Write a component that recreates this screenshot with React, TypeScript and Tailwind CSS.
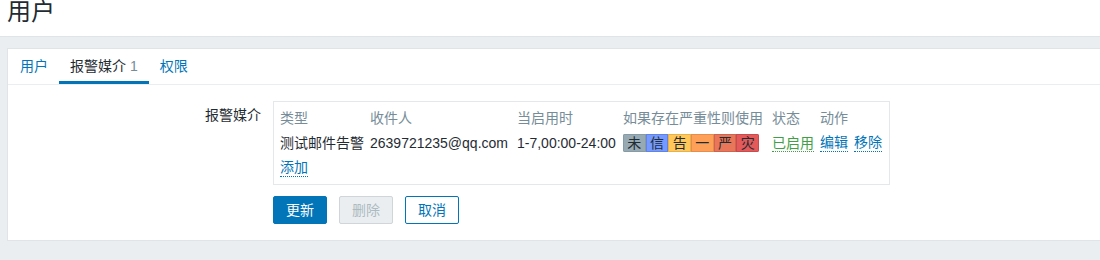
import React from "react";

const sev = [
  { t: "未", bg: "bg-[#97aab3]", bd: "border-[#859ba5]" },
  { t: "信", bg: "bg-[#7499ff]", bd: "border-[#6383e0]" },
  { t: "告", bg: "bg-[#ffc859]", bd: "border-[#e6b04c]" },
  { t: "一", bg: "bg-[#ffa059]", bd: "border-[#e68c4c]" },
  { t: "严", bg: "bg-[#e97659]", bd: "border-[#cf6550]" },
  { t: "灾", bg: "bg-[#e45959]", bd: "border-[#c84c4c]" },
];

export default function App() {
  return (
    <div
      className="w-[1100px] h-[260px] bg-[#ebeef0] text-[#1f2c33] overflow-hidden"
      style={{ fontFamily: '"Liberation Sans", Arial, "Noto Sans CJK SC", sans-serif' }}
    >
      <div className="h-[37px] bg-white border-b border-[#dfe4e7] pl-[7px]">
        <div className="text-[24px] leading-[24px]">用户</div>
      </div>
      <div className="pt-[11px] pl-[7px]">
        <div className="h-[193px] bg-white border border-r-0 border-[#dfe4e7]">
          <div className="flex h-[36px] border-b border-[#ebeef0] pl-[1px] text-[14px]">
            <div className="px-[11px] flex items-center text-[#0275b8]">用户</div>
            <div className="px-[11px] flex items-center border-b-[3px] border-[#0275b8] pt-[3px]">
              报警媒介<span className="text-[#768d99] ml-[4px]">1</span>
            </div>
            <div className="px-[11px] flex items-center text-[#0275b8]">权限</div>
          </div>
          <div className="pt-[16px] flex text-[14px]">
            <div className="w-[265px] text-right pr-[12px] pt-[6px] leading-[16px]">报警媒介</div>
            <div>
              <div className="w-[617px] border border-[#e4e8ea] pt-[4px] pb-[5px] pl-[6px]">
                <div className="grid grid-cols-[90px_147px_106px_149px_48px_62px] h-[24px] items-center text-[#768d99]">
                  <div>类型</div>
                  <div>收件人</div>
                  <div>当启用时</div>
                  <div>如果存在严重性则使用</div>
                  <div>状态</div>
                  <div>动作</div>
                </div>
                <div className="grid grid-cols-[90px_147px_106px_149px_48px_62px] h-[26px] items-center">
                  <div>测试邮件告警</div>
                  <div>2639721235@qq.com</div>
                  <div>1-7,00:00-24:00</div>
                  <div className="flex w-[136px] h-[18px] rounded-[2px] overflow-hidden">
                    {sev.map((s) => (
                      <div
                        key={s.t}
                        className={`flex-1 flex items-center justify-center border ${s.bg} ${s.bd} leading-none`}
                      >
                        {s.t}
                      </div>
                    ))}
                  </div>
                  <div>
                    <span className="text-[#429e47] border-b border-dotted border-[#429e47] leading-[17px]">已启用</span>
                  </div>
                  <div className="flex gap-[6px]">
                    <span className="text-[#0275b8] border-b border-dotted border-[#0275b8] leading-[17px]">编辑</span>
                    <span className="text-[#0275b8] border-b border-dotted border-[#0275b8] leading-[17px]">移除</span>
                  </div>
                </div>
                <div className="h-[23px] flex items-center">
                  <span className="text-[#0275b8] border-b border-dotted border-[#0275b8] leading-[17px]">添加</span>
                </div>
              </div>
              <div className="flex gap-[12px] mt-[11px]">
                <button className="w-[54px] h-[28px] rounded-[2px] bg-[#0275b8] border border-[#0275b8] text-white text-[14px]">更新</button>
                <button className="w-[54px] h-[28px] rounded-[2px] bg-[#ebeef0] border border-[#cfd5d9] text-[#acbbc2] text-[14px]">删除</button>
                <button className="w-[54px] h-[28px] rounded-[2px] bg-white border border-[#0275b8] text-[#0275b8] text-[14px]">取消</button>
              </div>
            </div>
          </div>
        </div>
      </div>
    </div>
  );
}
